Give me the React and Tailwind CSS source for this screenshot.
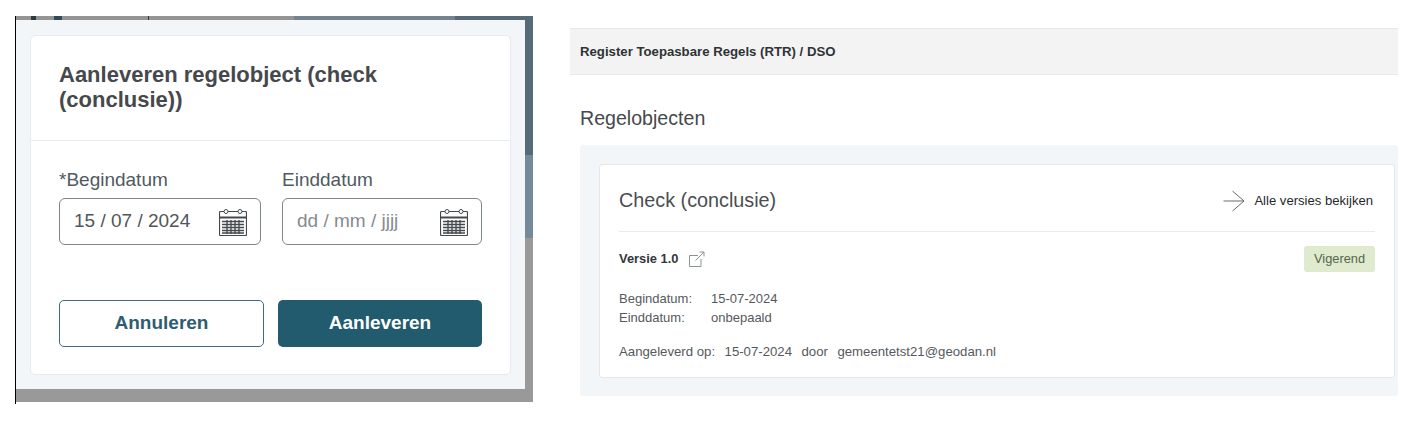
import React from 'react';

const CalendarIcon = () => (
  <svg width="28" height="28" viewBox="0 0 28 28" fill="none" stroke="#44494d" strokeWidth="1">
    <rect x="0.5" y="3.5" width="27" height="24" rx="1" fill="#fff" strokeWidth="1.2" />
    <path d="M0.5 9.5h27" strokeWidth="2" />
    <path d="M6 3.5h16" />
    <circle cx="7" cy="3.5" r="2" fill="#fff" />
    <circle cx="21" cy="3.5" r="2" fill="#fff" />
    <path d="M3 13.5h22M3 16.5h22M3 19.5h22M3 22.5h22M3 25h22M8 12v14M12 12v14M16 12v14M20 12v14" strokeWidth="1.3" />
  </svg>
);

const DateField = ({ label, value, placeholder, width }) => (
  <div className={width}>
    <div className="text-[19px] leading-[22px] text-[#505a60]">{label}</div>
    <div className="mt-[7px] flex h-[47px] items-center justify-between rounded-[6px] border border-[#7d868c] pl-[14px] pr-[13px]">
      <span className={placeholder ? 'text-[19px] text-[#858b90]' : 'text-[19px] text-[#50565b]'}>{value}</span>
      <CalendarIcon />
    </div>
  </div>
);

const DeliverModal = () => (
  <div className="flex items-start">
    <div className="h-[388px] w-px bg-black" />
    <div className="h-[386px] w-[517px] pb-[13px] pr-[8px] pt-[4px] [background:linear-gradient(90deg,#949494_15px,#2f3a40_15px,#2f3a40_20px,#949494_20px,#949494_38px,#2f4a58_38px,#2f4a58_46px,#949494_46px,#949494_132px,#333_132px,#333_133px,#949494_133px,#949494_278px,#75838f_278px,#75838f_439px,#566a78_439px)_top/100%_4px_no-repeat,linear-gradient(180deg,#566a78_139px,#76899a_139px,#76899a_222px,#999_222px)]">
      <div className="h-full bg-[#f2f6f9] py-[15px] pl-[14px] pr-[14px]">
        <div className="h-[340px] rounded-[5px] border border-[#e6ebef] bg-white">
          <div className="h-[105px] border-b border-[#e6ebef] pl-[28px] pt-[26px] text-[22px] font-bold leading-[25px] text-[#45484c]">
            Aanleveren regelobject (check
            <br />
            (conclusie))
          </div>
          <div className="flex gap-[21px] pl-[28px] pt-[28px]">
            <DateField label="*Begindatum" value="15 / 07 / 2024" width="w-[202px]" />
            <DateField label="Einddatum" value="dd / mm / jjjj" placeholder width="w-[200px]" />
          </div>
          <div className="flex gap-[14px] pl-[28px] pt-[55px]">
            <button className="h-[47px] w-[205px] rounded-[5px] border border-[#3e6d7e] bg-white text-[19px] font-bold text-[#2f5d70]">
              Annuleren
            </button>
            <button className="h-[47px] w-[204px] rounded-[5px] bg-[#215b6d] text-[19px] font-bold text-white">
              Aanleveren
            </button>
          </div>
        </div>
      </div>
    </div>
  </div>
);

const RegelObjects = () => (
  <div className="w-[828px]">
    <div className="flex h-[47px] items-center border-y border-[#e8e8e8] bg-[#f3f3f3] pl-[10px] text-[13.2px] font-bold text-[#2f3336]">
      Register Toepasbare Regels (RTR) / DSO
    </div>
    <div className="pl-[10px] pt-[31px] text-[19.6px] leading-[24px] text-[#45494c]">Regelobjecten</div>
    <div className="ml-[10px] mt-[15px] h-[251px] w-[818px] rounded-[3px] bg-[#f2f6f9] pl-[19px] pt-[19px]">
      <div className="h-[214px] w-[796px] rounded-[3px] border border-[#e4e8eb] bg-white px-[19px]">
        <div className="flex h-[67px] items-center justify-between border-b border-[#e8ebee] pr-[2px] pt-[6px]">
          <span className="text-[19.8px] text-[#4a4e52]">Check (conclusie)</span>
          <span className="flex items-center gap-[9px] text-[13.1px] text-[#26292c]">
            <svg width="22" height="22" viewBox="0 0 22 22" fill="none" stroke="#666a6e" strokeWidth="1">
              <path d="M0.5 11H21M9.5 1L21 11L9.5 21" />
            </svg>
            Alle versies bekijken
          </span>
        </div>
        <div className="flex items-center justify-between pt-[14px]">
          <span className="flex items-center gap-[10px] text-[12.9px] font-bold text-[#33373a]">
            Versie 1.0
            <svg width="16" height="16" viewBox="0 0 16 16" fill="none" stroke="#8d9296" strokeWidth="1">
              <path d="M9 4.5H0.5V15.5H12V8M6.5 9.5L15 1M10.5 1H15V5.5" />
            </svg>
          </span>
          <span className="flex h-[26px] items-center rounded-[3px] bg-[#dfeacf] px-[10px] text-[12.8px] text-[#55654a]">
            Vigerend
          </span>
        </div>
        <div className="grid grid-cols-[92px_1fr] pt-[17px] text-[13px] leading-[19px] text-[#55595d]">
          <span>Begindatum:</span>
          <span>15-07-2024</span>
          <span>Einddatum:</span>
          <span>onbepaald</span>
        </div>
        <div className="flex gap-[9.5px] pt-[15px] text-[13.2px] leading-[19px] text-[#55595d]">
          <span>Aangeleverd op:</span>
          <span>15-07-2024</span>
          <span>door</span>
          <span>gemeentetst21@geodan.nl</span>
        </div>
      </div>
    </div>
  </div>
);

export default function App() {
  return (
    <div className="flex h-[421px] w-[1411px] items-start overflow-hidden bg-white pl-[15px] font-['Liberation_Sans',Arial,sans-serif]">
      <div className="mt-[16px]">
        <DeliverModal />
      </div>
      <div className="ml-[37px] mt-[28px]">
        <RegelObjects />
      </div>
    </div>
  );
}
